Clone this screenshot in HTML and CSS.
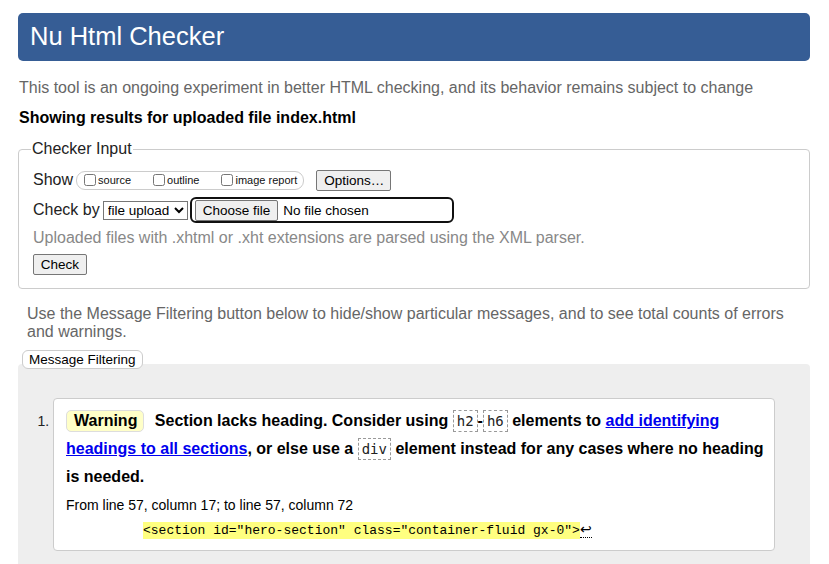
FILE: index.html
```html
<!DOCTYPE html>
<html>
<head>
<meta charset="utf-8">
<title>Nu Html Checker</title>
<link rel="stylesheet" href="styles.css">
</head>
<body>
<h1 class="title">Nu Html Checker</h1>
<p class="intro">This tool is an ongoing experiment in better HTML checking, and its behavior remains subject to change</p>
<p class="showing">Showing results for uploaded file index.html</p>
<fieldset class="checker">
  <legend>Checker Input</legend>
  <div class="row">
    <span class="lbl">Show</span>
    <span class="opts">
      <label class="opt"><input type="checkbox">source</label>
      <label class="opt"><input type="checkbox">outline</label>
      <label class="opt"><input type="checkbox">image report</label>
    </span>
    <button class="btn opts-btn">Options…</button>
  </div>
  <div class="row">
    <span class="lbl">Check by</span>
    <select class="sel"><option>file upload</option></select>
    <span class="file"><button class="btn">Choose file</button><span class="nofile">No file chosen</span></span>
  </div>
  <p class="note">Uploaded files with .xhtml or .xht extensions are parsed using the XML parser.</p>
  <button class="btn check">Check</button>
</fieldset>
<p class="filter-text">Use the Message Filtering button below to hide/show particular messages, and to see total counts of errors and warnings.</p>
<button class="filter-btn">Message Filtering</button>
<div class="results">
  <ol class="msgs">
    <li class="msg">
      <p class="msg-text"><span class="badge">Warning</span> <span class="m">Section lacks heading. Consider using <code>h2</code>-<code>h6</code> elements to <a href="#">add identifying headings to all sections</a>, or else use a <code>div</code> element instead for any cases where no heading is needed.</span></p>
      <p class="loc">From line 57, column 17; to line 57, column 72</p>
      <p class="extract"><code class="hl">&lt;section id="hero-section" class="container-fluid gx-0"&gt;</code><span class="lf">↩</span></p>
    </li>
  </ol>
</div>
</body>
</html>
```
FILE: styles.css
```css
html, body {
  margin: 0;
  background: #fff;
}
body {
  padding: 13px 19px 0 18px;
  font-family: "Liberation Sans", Arial, sans-serif;
  font-size: 16px;
  color: #000;
}
.title {
  margin: 0;
  height: 48px;
  line-height: 46px;
  padding-left: 12px;
  background: #365d95;
  color: #fff;
  font-size: 25.5px;
  font-weight: normal;
  border-radius: 5px;
}
.intro {
  margin: 17px 0 0 1px;
  color: #666;
  line-height: 20px;
}
.showing {
  margin: 10px 0 0 1px;
  font-weight: bold;
  line-height: 20px;
}
.checker {
  margin: 12px 0 0 0;
  padding: 7px 14px 13px 14px;
  border: 1px solid #ccc;
  border-radius: 4px;
}
.checker legend {
  padding: 0 1px;
  margin-left: -2px;
  font-size: 16px;
  line-height: 18px;
  color: #222;
}
.row {
  display: flex;
  align-items: center;
  height: 30px;
}
.lbl {
  margin-right: 3px;
  color: #222;
}
.opts {
  display: inline-flex;
  align-items: center;
  height: 17px;
  border: 1px solid #ccc;
  border-radius: 9px;
  padding: 0 6px 0 5px;
  margin-right: 12px;
}
.opt {
  display: inline-flex;
  align-items: center;
  font-size: 11px;
  color: #111;
  margin-right: 20px;
}
.opt:last-child { margin-right: 0; }
.opt input {
  margin: 0 2px 0 2px;
  width: 12px;
  height: 12px;
}
.btn {
  font-family: "Liberation Sans", Arial, sans-serif;
  font-size: 13.5px;
  background: #efefef;
  border: 1px solid #767676;
  border-radius: 2px;
  padding: 1px 7px;
  color: #000;
  height: 21px;
}
.opts-btn { width: 75px; }
.sel {
  font-family: "Liberation Sans", Arial, sans-serif;
  font-size: 13.5px;
  height: 19px;
  width: 85px;
  padding: 0;
  border: 1px solid #767676;
  border-radius: 0;
  background: #fff;
  margin-right: 2px;
}
.file {
  box-sizing: border-box;
  display: inline-flex;
  align-items: center;
  width: 264px;
  height: 26px;
  border: 2px solid #101010;
  border-radius: 6px;
  padding-left: 3px;
  font-size: 13.5px;
}
.file .btn { margin-right: 5px; height: 21px; }
.nofile { color: #000; }
.note {
  margin: 3px 0 0 0;
  color: #888;
  line-height: 20px;
}
.check {
  margin-top: 6px;
  width: 54px;
  padding: 1px 6px;
}
.filter-text {
  margin: 16px 0 0 9px;
  color: #666;
  line-height: 18px;
}
.filter-btn {
  display: block;
  margin: 9px 0 0 4px;
  font-family: "Liberation Sans", Arial, sans-serif;
  font-size: 13.5px;
  background: #fff;
  border: 1px solid #ccc;
  border-radius: 6px;
  padding: 1px 6px;
  height: 19px;
  position: relative;
  z-index: 1;
  color: #000;
}
.results {
  margin-top: -5px;
  background: #eee;
  border-radius: 4px 4px 0 0;
  padding: 34px 0 20px 0;
  min-height: 200px;
}
.msgs {
  margin: 0;
  padding: 0 35px 0 35px;
  font-size: 14px;
}
.msg {
  background: #fff;
  border: 1px solid #ccc;
  border-radius: 4px;
  padding: 8px 4px 9px 12px;
  color: #000;
}
.msg::marker {
  color: #222;
}
.msg-text {
  margin: 0;
  font-size: 16px;
  font-weight: bold;
  line-height: 28px;
}
.badge {
  display: inline-block;
  background: #ffffc8;
  border: 1px solid #ddd;
  border-radius: 5px;
  padding: 0 6px 0 7px;
  line-height: 20px;
  margin-right: 6px;
}
.msg-text code {
  display: inline-block;
  font-family: "DejaVu Sans Mono", monospace;
  font-weight: normal;
  font-size: 14px;
  line-height: 20px;
  border: 1px dashed #999;
  padding: 0 3px;
  color: #222;
}
.msg-text a {
  color: #00e;
}
.loc {
  margin: 0;
  line-height: 28px;
  font-size: 14px;
}
.extract {
  margin: 0;
  padding-left: 77px;
  line-height: 21px;
}
.hl {
  font-family: "Liberation Mono", monospace;
  font-size: 13px;
  background: #ffff80;
  padding: 1px 0;
}
.lf {
  font-size: 14px;
  border-bottom: 1px dotted #000;
}
```
